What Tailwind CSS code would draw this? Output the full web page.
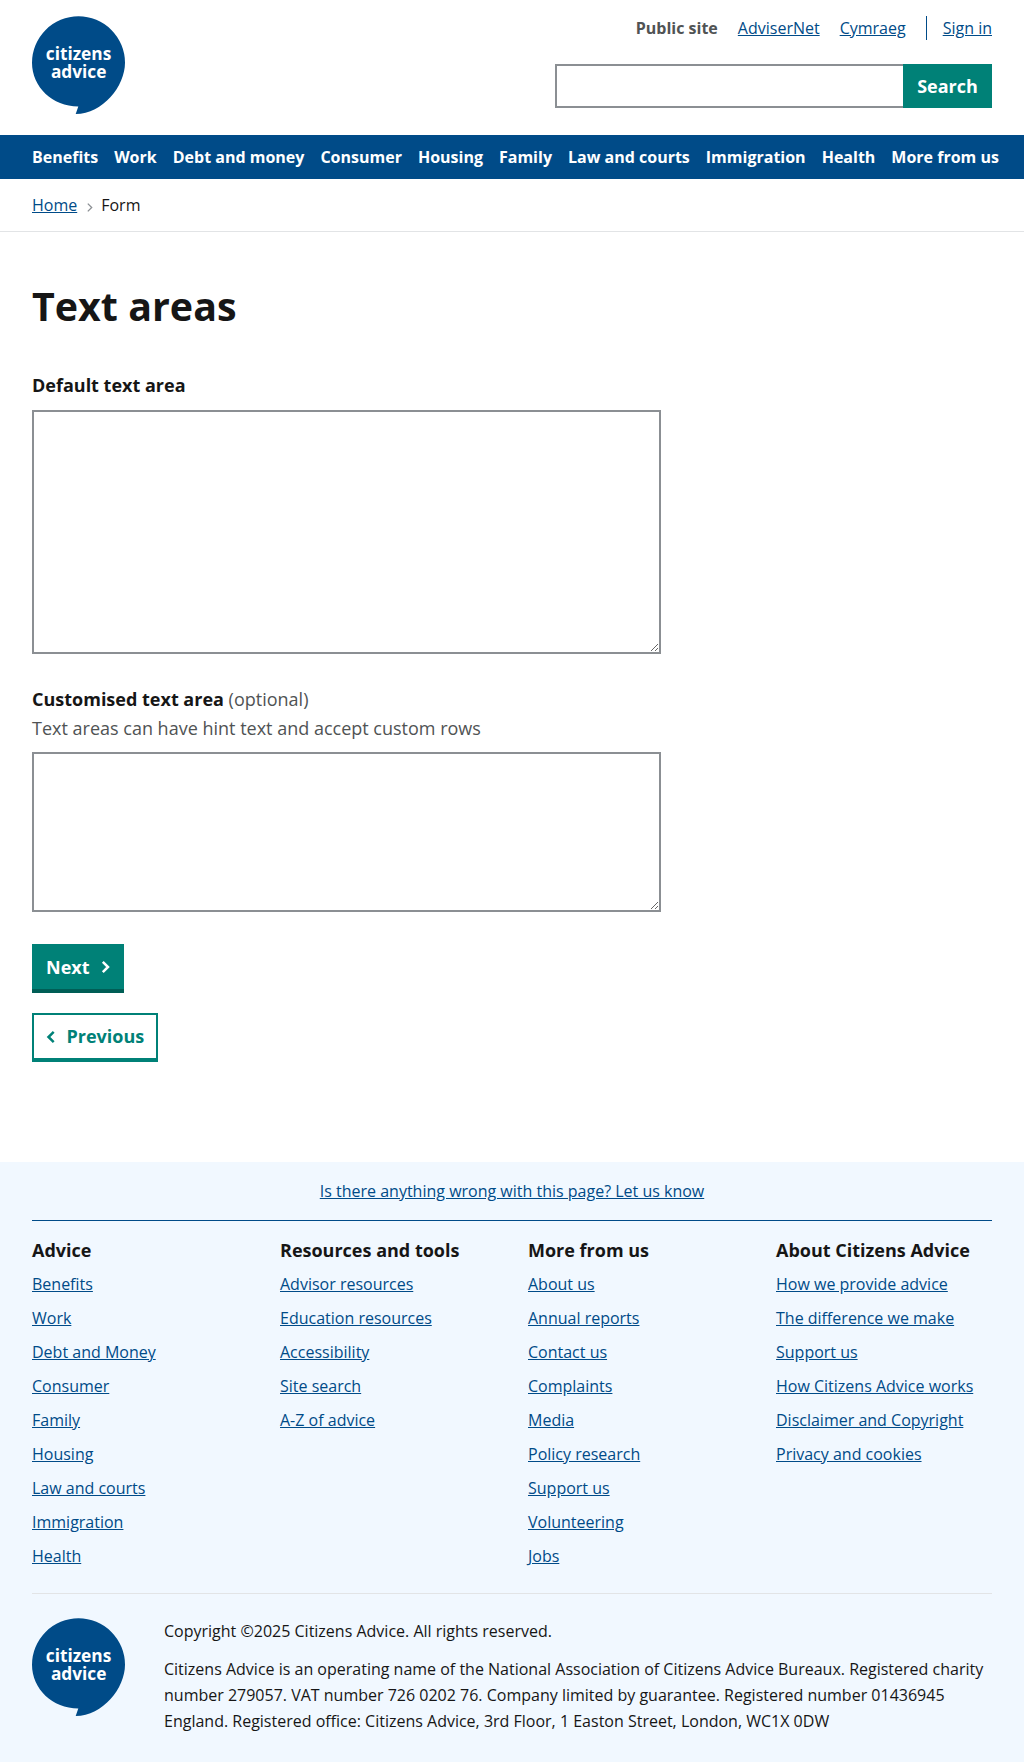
<!DOCTYPE html>
<html lang="en">
<head>
<meta charset="utf-8">
<title>Text areas</title>
<script src="https://cdn.jsdelivr.net/npm/@tailwindcss/browser@4"></script>
</head>
<body class="bg-white font-['Open_Sans',sans-serif] text-base leading-6 text-[#161616]">
<svg class="hidden">
  <symbol id="logo" viewBox="0 0 93 98">
    <path fill="#004b88" d="M46.3 90.5C20.5 90.5 0 71 0 46.8A46.5 46.5 0 0 1 93 46.8C93 70 71 98 43.7 98L46.3 90.5Z"/>
    <g fill="#fff" font-family="Open Sans, sans-serif" font-weight="700" font-size="18" text-anchor="middle">
      <text x="46.5" y="43.9" textLength="65.5" lengthAdjust="spacingAndGlyphs">citizens</text>
      <text x="46.7" y="62" textLength="55.5" lengthAdjust="spacingAndGlyphs">advice</text>
    </g>
  </symbol>
</svg>
<header class="flex h-[135px] justify-between px-8 pt-4">
  <svg class="h-[98px] w-[93px]"><use href="#logo"/></svg>
  <div class="flex flex-col items-end gap-6">
    <div class="flex gap-5 text-[#004b88]">
      <span class="font-bold text-[#505354]">Public site</span>
      <a class="underline">AdviserNet</a>
      <a class="underline">Cymraeg</a>
      <a class="border-l border-[#004b88] pl-4 underline">Sign in</a>
    </div>
    <div class="flex h-11">
      <input class="w-[348px] border-2 border-r-0 border-[#8b8f93]" aria-label="Search">
      <button class="w-[89px] bg-[#008177] text-lg font-bold text-white">Search</button>
    </div>
  </div>
</header>
<nav class="flex h-11 items-center gap-4 bg-[#004b88] px-8 font-bold whitespace-nowrap text-white">
  <a>Benefits</a><a>Work</a><a>Debt and money</a><a>Consumer</a><a>Housing</a><a>Family</a><a>Law and courts</a><a>Immigration</a><a>Health</a><a>More from us</a>
</nav>
<div class="flex h-[53px] border-b border-[#e2e4e6] px-8 pt-3.5">
  <a class="text-[#004b88] underline">Home</a>
  <svg class="mt-[9.5px] mr-[8px] ml-2.5 h-[9px] w-[6px]" viewBox="0 0 6 9" fill="none" stroke="#8b8f93" stroke-width="1.3"><path d="M.8 .6 4.7 4.5.8 8.4"/></svg>
  <span>Form</span>
</div>
<main class="flex h-[930px] flex-col items-start px-8 pt-[49px]">
  <h1 class="text-[39.4px] leading-[50px] font-bold">Text areas</h1>
  <label class="mt-[41px] mb-[11px] text-lg leading-[27px] font-bold">Default text area</label>
  <textarea class="block h-[244px] w-[629px] shrink-0 border-2 border-[#8b8f93]"></textarea>
  <label class="mt-8 text-lg leading-[27px]"><b>Customised text area</b> <span class="text-[#505354]">(optional)</span></label>
  <p class="mt-0.5 mb-2.5 text-lg leading-[27px] text-[#505354]">Text areas can have hint text and accept custom rows</p>
  <textarea class="block h-40 w-[629px] shrink-0 border-2 border-[#8b8f93]"></textarea>
  <button class="mt-8 flex h-[49px] w-[92px] shrink-0 items-center border-b-4 border-[#005e56] bg-[#008177] pl-3.5 text-lg font-bold text-white">Next
    <svg class="mt-px ml-3 h-3 w-2 overflow-visible" viewBox="0 0 8 12" fill="none" stroke="currentColor" stroke-width="2.5"><path d="M.8 .9 6 6 .8 11.1"/></svg>
  </button>
  <button class="mt-5 flex h-[49px] w-[126px] shrink-0 items-center border-2 border-b-4 border-[#008177] pb-px pl-[13px] text-lg font-bold text-[#008177]">
    <svg class="mt-px mr-[11.5px] h-3 w-2 overflow-visible" viewBox="0 0 8 12" fill="none" stroke="currentColor" stroke-width="2.5"><path d="M6.7 .9 1.5 6 6.7 11.1"/></svg>Previous
  </button>
</main>
<footer class="h-[600px] bg-[#f1f8ff] px-8">
  <div class="flex h-[59px] items-start justify-center border-b border-[#004b88] pt-[17px]"><a class="text-[#004b88] underline">Is there anything wrong with this page? Let us know</a></div>
  <div class="grid h-[373px] grid-cols-4 gap-x-8 border-b border-[#e2e4e6] pt-4 whitespace-nowrap text-[#004b88]">
    <div class="flex flex-col items-start gap-2.5">
      <h2 class="-mb-0.5 text-lg leading-[27px] font-bold text-[#161616]">Advice</h2>
      <a class="underline">Benefits</a><a class="underline">Work</a><a class="underline">Debt and Money</a><a class="underline">Consumer</a><a class="underline">Family</a><a class="underline">Housing</a><a class="underline">Law and courts</a><a class="underline">Immigration</a><a class="underline">Health</a>
    </div>
    <div class="flex flex-col items-start gap-2.5">
      <h2 class="-mb-0.5 text-lg leading-[27px] font-bold text-[#161616]">Resources and tools</h2>
      <a class="underline">Advisor resources</a><a class="underline">Education resources</a><a class="underline">Accessibility</a><a class="underline">Site search</a><a class="underline">A-Z of advice</a>
    </div>
    <div class="flex flex-col items-start gap-2.5">
      <h2 class="-mb-0.5 text-lg leading-[27px] font-bold text-[#161616]">More from us</h2>
      <a class="underline">About us</a><a class="underline">Annual reports</a><a class="underline">Contact us</a><a class="underline">Complaints</a><a class="underline">Media</a><a class="underline">Policy research</a><a class="underline">Support us</a><a class="underline">Volunteering</a><a class="underline">Jobs</a>
    </div>
    <div class="flex flex-col items-start gap-2.5">
      <h2 class="-mb-0.5 text-lg leading-[27px] font-bold text-[#161616]">About Citizens Advice</h2>
      <a class="underline">How we provide advice</a><a class="underline">The difference we make</a><a class="underline">Support us</a><a class="underline">How Citizens Advice works</a><a class="underline">Disclaimer and Copyright</a><a class="underline">Privacy and cookies</a>
    </div>
  </div>
  <div class="flex gap-[39px] pt-6 leading-[26px]">
    <svg class="h-[98px] w-[93px] shrink-0"><use href="#logo"/></svg>
    <div>
      <p class="mb-3">Copyright ©2025 Citizens Advice. All rights reserved.</p>
      <p>Citizens Advice is an operating name of the National Association of Citizens Advice Bureaux. Registered charity number 279057. VAT number 726 0202 76. Company limited by guarantee. Registered number 01436945 England. Registered office: Citizens Advice, 3rd Floor, 1 Easton Street, London, WC1X 0DW</p>
    </div>
  </div>
</footer>
</body>
</html>
